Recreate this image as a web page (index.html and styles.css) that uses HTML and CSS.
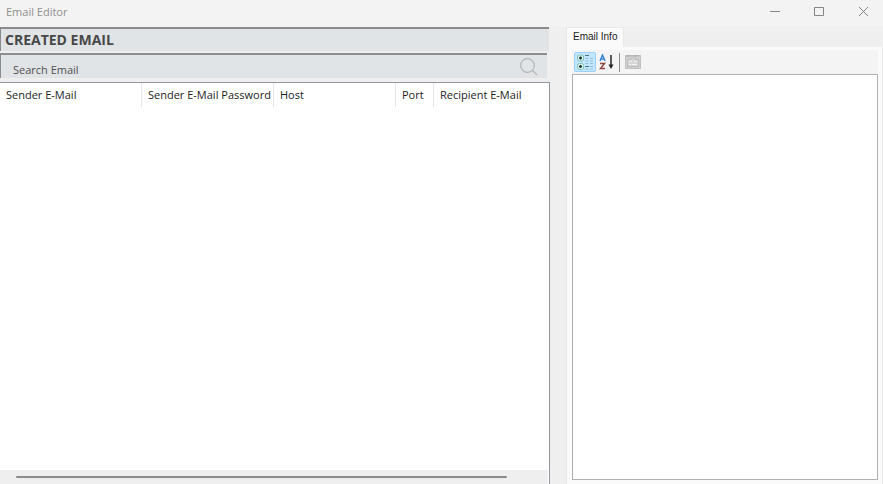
FILE: index.html
```html
<!DOCTYPE html>
<html lang="en">
<head>
    <meta charset="UTF-8">
    <meta name="viewport" content="width=device-width, initial-scale=1.0">
    <title>Email Editor</title>
    <link rel="stylesheet" href="styles.css">
</head>
<body>
    <header class="title-bar">
        <span class="window-title">Email Editor</span>
        <div class="window-buttons">
            <button type="button" aria-label="Minimize">
                <svg width="11" height="11" viewBox="0 0 11 11"><path d="M0 5.5h10"/></svg>
            </button>
            <button type="button" aria-label="Maximize">
                <svg width="11" height="11" viewBox="0 0 11 11"><path d="M0.5 1.5h9v8h-9z"/></svg>
            </button>
            <button type="button" aria-label="Close">
                <svg width="11" height="11" viewBox="0 0 11 11"><path d="M1 1l9 9M10 1l-9 9"/></svg>
            </button>
        </div>
    </header>

    <main class="editor">
        <section class="email-list">
            <h1>CREATED EMAIL</h1>
            <div class="search-bar">
                <input type="text" placeholder="Search Email" aria-label="Search Email">
                <button type="button" class="search-button" aria-label="Search">
                    <svg width="18" height="18" viewBox="0 0 18 18"><circle cx="7.5" cy="7.5" r="6.8"/><path d="M12.5 12.5l4.5 4.5"/></svg>
                </button>
            </div>
            <div class="list-view">
                <table>
                    <colgroup>
                        <col class="col-sender">
                        <col class="col-password">
                        <col class="col-host">
                        <col class="col-port">
                        <col>
                    </colgroup>
                    <thead>
                        <tr>
                            <th>Sender E-Mail</th>
                            <th>Sender E-Mail Password</th>
                            <th>Host</th>
                            <th>Port</th>
                            <th>Recipient E-Mail</th>
                        </tr>
                    </thead>
                </table>
                <div class="scrollbar"><div class="scroll-thumb"></div></div>
            </div>
        </section>

        <section class="info">
            <div class="tabs" role="tablist">
                <button type="button" class="tab" role="tab" aria-selected="true">Email Info</button>
            </div>
            <div class="tab-page">
                <div class="toolbar">
                    <button type="button" class="tool selected" aria-label="Categorized">
                        <svg width="16" height="16" viewBox="0 0 16 16">
                            <rect x="0.5" y="1" width="6" height="6" rx="2" fill="#d9f2ec" stroke="#7fc0b4"/>
                            <rect x="0.5" y="9.5" width="6" height="6" rx="2" fill="#d9f2ec" stroke="#7fc0b4"/>
                            <path d="M2 4h3M3.5 2.5v3M2 12.5h3M3.5 11v3" stroke="#17332f" stroke-width="1.4"/>
                            <path d="M8 1.5h4M8 12.5h4" stroke="#4d7185"/>
                            <path d="M8.5 4.5h3M8.5 7h3M8.5 9.5h3M8.5 15h3M13 4.5h3M13 7h3M13 9.5h3M13 12.5h3M13 15h3" stroke="#8cc4d2"/>
                        </svg>
                    </button>
                    <button type="button" class="tool" aria-label="Alphabetical">
                        <svg width="16" height="16" viewBox="0 0 16 16">
                            <path d="M1 7l2.500-6L6 7M2 5h3" fill="none" stroke="#3984d6" stroke-width="1.5"/>
                            <path d="M1 9.500h4.500L1.500 14.500H6" fill="none" stroke="#8e4944" stroke-width="1.5"/>
                            <path d="M12 1v11" stroke="#333" stroke-width="1.6"/>
                            <path d="M9.500 10.500h5L12 15z" fill="#222"/>
                        </svg>
                    </button>
                    <span class="separator"></span>
                    <button type="button" class="tool" aria-label="Property Pages" disabled>
                        <svg width="16" height="16" viewBox="0 0 16 16">
                            <rect x="0.5" y="1.5" width="15" height="13" fill="#d0d0d0" stroke="#c2c2c2"/>
                            <path d="M1 2h14" stroke="#a5a5a5" stroke-dasharray="4 1 1 1"/>
                            <path d="M2.500 5.500h3l1-1.500h3l1 1.500h3v7h-11z" fill="#d6d6d6" stroke="#bcbcbc"/>
                            <path d="M4 7.500h3M9 7.500h3M4 10.500h2M7 10.500h5" stroke="#f4f4f4"/>
                        </svg>
                    </button>
                </div>
                <div class="property-grid"></div>
            </div>
        </section>
    </main>
</body>
</html>
```
FILE: styles.css
```css
* {
    box-sizing: border-box;
}

body {
    display: flex;
    flex-direction: column;
    min-height: 100vh;
    margin: 0;
    background: #efefef;
    color: #1c1c1c;
    font-family: "Open Sans", "Noto Sans", sans-serif;
    font-size: 11px;
}

button {
    padding: 0;
    border: none;
    background: none;
    color: inherit;
    font: inherit;
}

svg {
    display: block;
}

/* Title bar */
.title-bar {
    display: flex;
    justify-content: space-between;
    align-items: center;
    height: 27px;
    padding: 0 14px 4px 6px;
    background: #f3f3f3;
    color: #909090;
}

.window-buttons {
    display: flex;
    gap: 33px;
}

.window-buttons svg {
    fill: none;
    stroke: #858585;
}

/* Main columns */
.editor {
    display: flex;
    flex: 1;
    gap: 16px;
}

.email-list {
    display: flex;
    flex: 1;
    flex-direction: column;
}

h1 {
    height: 24px;
    margin: 0 1px 0 0;
    padding-left: 4px;
    border-top: 2px solid #8b8b8b;
    border-left: 1px solid #8b8b8b;
    background: #e1e4e7;
    color: #484848;
    font-size: 14px;
    font-weight: 700;
    line-height: 21px;
}

.search-bar {
    display: flex;
    align-items: center;
    height: 25px;
    margin: 2px 3px 4px 0;
    padding-right: 9px;
    border-top: 2px solid #8e8e8e;
    border-left: 1px solid #8b8b8b;
    background: #e1e4e7;
}

.search-bar input {
    flex: 1;
    height: 23px;
    padding: 5px 0 0 12px;
    border: none;
    outline: none;
    background: none;
    font: inherit;
}

.search-bar input::placeholder {
    color: #505050;
    opacity: 1;
}

.search-button svg {
    fill: none;
    stroke: #b3b5b7;
    stroke-width: 1.2;
}

.list-view {
    display: flex;
    flex: 1;
    flex-direction: column;
    justify-content: space-between;
    border-top: 1px solid #92969e;
    border-right: 1px solid #92969e;
    background: white;
}

table {
    width: 100%;
    border-spacing: 0;
    table-layout: fixed;
}

.col-sender {
    width: 142px;
}

.col-password {
    width: 132px;
}

.col-host {
    width: 122px;
}

.col-port {
    width: 38px;
}

th {
    height: 24px;
    padding: 0 0 1px 6px;
    border-right: 1px solid #e5e5e5;
    font-weight: 400;
    text-align: left;
    white-space: nowrap;
}

th:last-child {
    border-right: none;
}

.scrollbar {
    height: 14px;
    margin-right: 1px;
    padding: 6px 41px 0 16px;
    background: #efefef;
}

.scroll-thumb {
    height: 2px;
    border-radius: 1px;
    background: #8b8b8b;
}

/* Email info */
.info {
    display: flex;
    flex-direction: column;
    width: 317px;
}

.tab {
    display: block;
    height: 20px;
    padding: 0 6px 2px;
    border: 1px solid #e8e8e8;
    border-bottom: none;
    background: #fafafa;
    font-family: "Liberation Sans", Arial, sans-serif;
    font-size: 10px;
}

.tab-page {
    display: flex;
    flex: 1;
    flex-direction: column;
    padding: 3px 4px 4px 5px;
    border: 1px solid #e8e8e8;
    border-top: none;
    border-bottom: none;
    background: #fafafa;
}

.toolbar {
    display: flex;
    align-items: center;
    height: 24px;
    padding-left: 2px;
    background: #f4f4f4;
}

.tool {
    display: flex;
    justify-content: center;
    align-items: center;
    width: 22px;
    height: 20px;
}

.tool.selected {
    border: 1px solid #99d1ff;
    border-radius: 2px;
    background: #c4e5ff;
}

.separator {
    width: 1px;
    height: 19px;
    margin: 0 2px 0 1px;
    background: #8c8c8c;
}

.property-grid {
    flex: 1;
    border: 1px solid #b0b0b0;
    background: white;
}
```
